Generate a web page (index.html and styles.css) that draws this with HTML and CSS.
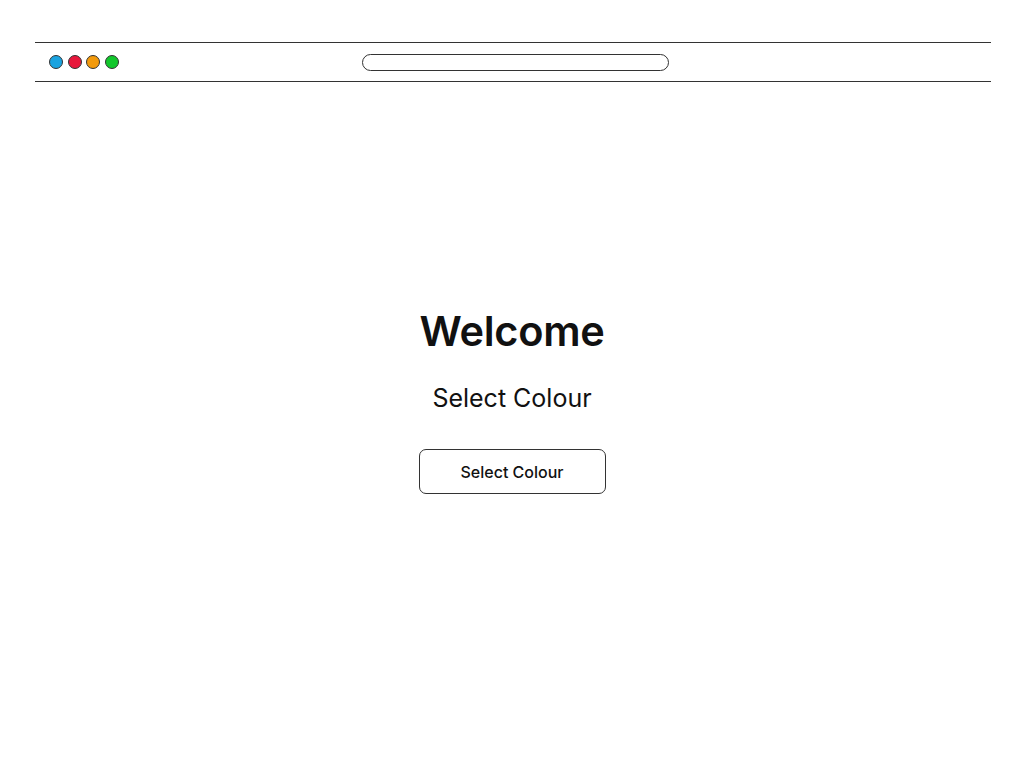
FILE: index.html
```html
<!DOCTYPE html>
<html lang="en">
<head>
    <meta charset="UTF-8">
    <meta name="viewport" content="width=device-width, initial-scale=1.0">
    <title>Welcome</title>
    <link rel="stylesheet" href="styles.css">
</head>
<body>

<div id="toolbar">
    <div class="dots">
        <span class="dot blue"></span>
        <span class="dot red"></span>
        <span class="dot orange"></span>
        <span class="dot green"></span>
    </div>
    <div id="address-bar"></div>
</div>

<div id="content">
    <h1 class="title">Welcome</h1>
    <p class="subtitle">Select Colour</p>
    <button class="select-btn">Select Colour</button>
</div>

</body>
</html>
```

FILE: styles.css
```css
body {
    font-family: 'Inter', 'Noto Sans', sans-serif;
    margin: 0;
    padding: 0;
    background-color: #ffffff;
    color: #111111;
}

#toolbar {
    margin: 42px 33px 0 35px;
    height: 38px;
    border-top: 1.5px solid #333333;
    border-bottom: 1.5px solid #333333;
    display: flex;
    align-items: center;
}

.dots {
    display: flex;
    gap: 4.5px;
    margin-left: 14px;
}

.dot {
    box-sizing: border-box;
    width: 14px;
    height: 14px;
    border-radius: 50%;
    border: 1px solid #333333;
}

.blue { background-color: #1aa3e0; }
.red { background-color: #e8183c; }
.orange { background-color: #f39a0c; }
.green { background-color: #12c72c; }

#address-bar {
    margin-left: 243px;
    width: 305px;
    height: 15px;
    border: 1.5px solid #333333;
    border-radius: 10px;
}

#content {
    display: flex;
    flex-direction: column;
    align-items: center;
    padding-top: 224px;
}

.title {
    font-size: 41.5px;
    font-weight: 600;
    margin: 0;
    line-height: 50px;
    letter-spacing: -0.3px;
}

.subtitle {
    font-size: 25px;
    margin: 26px 0 0 0;
    line-height: 32px;
}

.select-btn {
    margin-top: 35px;
    width: 187px;
    height: 45px;
    background-color: #ffffff;
    border: 1.5px solid #333333;
    border-radius: 7px;
    font-family: 'Inter', 'Noto Sans', sans-serif;
    font-size: 16px;
    font-weight: 500;
    color: #111111;
}
```
